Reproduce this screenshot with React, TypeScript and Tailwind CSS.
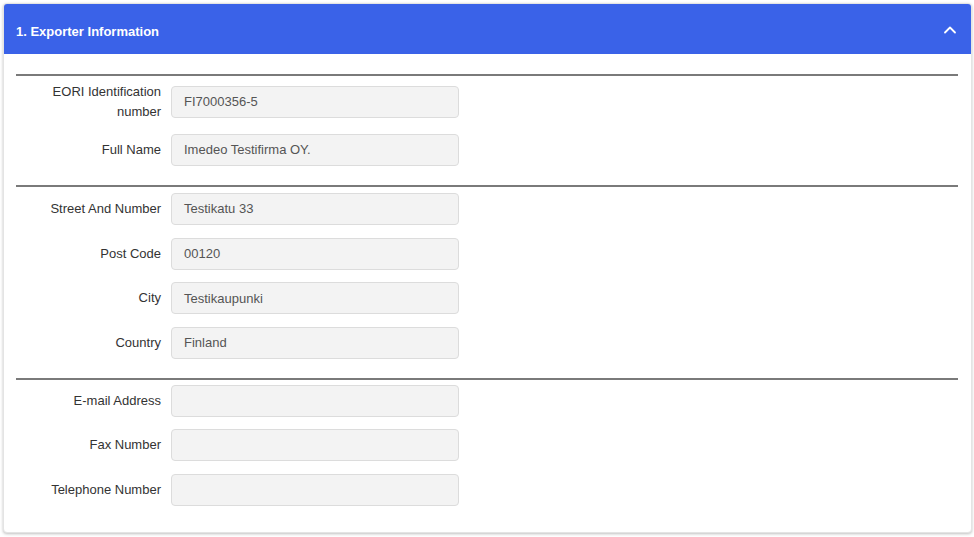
import { ChevronUp } from "lucide-react";

type Field = { label: React.ReactNode; value: string };

const sections: { rows: Field[]; cls: string }[] = [
  {
    cls: "pt-[6px] pb-[19px] gap-[12px]",
    rows: [
      { label: <>EORI Identification<br />number</>, value: "FI7000356-5" },
      { label: "Full Name", value: "Imedeo Testifirma OY." },
    ],
  },
  {
    cls: "pt-[6px] pb-[19px] gap-[12.67px]",
    rows: [
      { label: "Street And Number", value: "Testikatu 33" },
      { label: "Post Code", value: "00120" },
      { label: "City", value: "Testikaupunki" },
      { label: "Country", value: "Finland" },
    ],
  },
  {
    cls: "pt-[5px] pb-[20px] gap-[12.5px]",
    rows: [
      { label: "E-mail Address", value: "" },
      { label: "Fax Number", value: "" },
      { label: "Telephone Number", value: "" },
    ],
  },
];

function Row({ field }: { field: Field }) {
  return (
    <div className="flex items-center">
      <label className="w-[145px] shrink-0 text-right text-[13px] leading-[20px] text-[#333]">
        {field.label}
      </label>
      <div className="ml-[10px] flex h-[32px] w-[288px] items-center rounded-[4px] border border-[#dcdcdc] bg-[#f3f3f3] px-[12px] text-[13px] text-[#555]">
        {field.value}
      </div>
    </div>
  );
}

export default function App() {
  return (
    <div className="min-h-screen bg-white p-[3px] font-['Liberation_Sans',Arial,sans-serif]">
      <div className="w-[969px] overflow-hidden rounded-[4px] border border-[#e4e4e4] bg-white shadow-[0_1px_3px_rgba(0,0,0,0.25)]">
        <div className="flex h-[50px] items-center justify-between bg-[#3a62e8] pl-[12px] pr-[11px] pt-[5px]">
          <span className="text-[13px] font-bold text-white">1. Exporter Information</span>
          <ChevronUp className="-mt-[3px] h-[20px] w-[20px] text-white" strokeWidth={2.2} />
        </div>
        <div className="px-[12px] pt-[20px] pb-[6px]">
          {sections.map((s, i) => (
            <div key={i} className={`mr-[1px] flex flex-col border-t-2 border-[#7a7a7a] ${s.cls}`}>
              {s.rows.map((f, j) => (
                <Row key={j} field={f} />
              ))}
            </div>
          ))}
        </div>
      </div>
    </div>
  );
}
